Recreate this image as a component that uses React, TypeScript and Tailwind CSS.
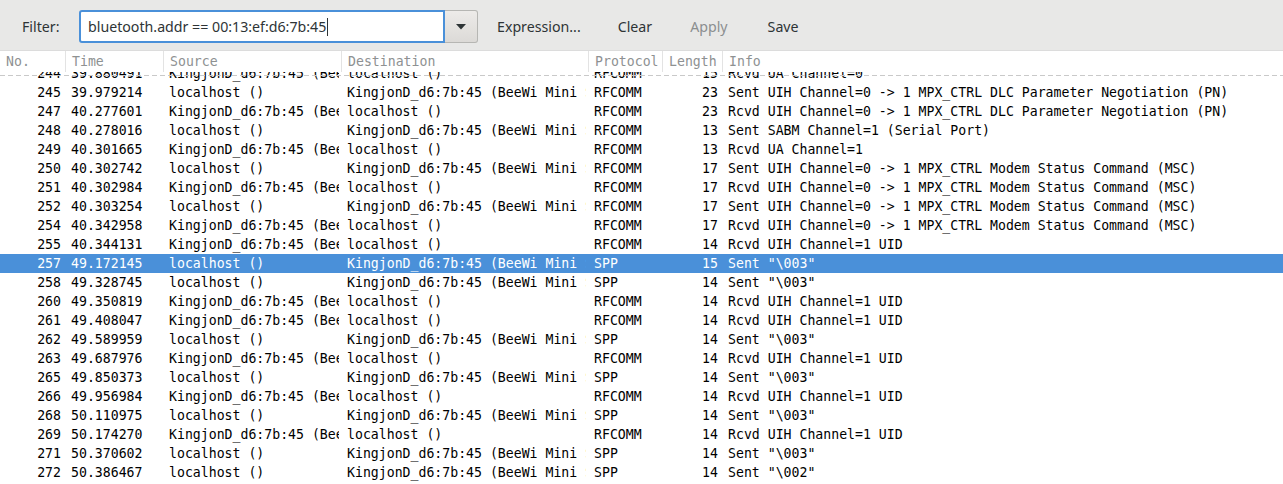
type Pkt = {
  no: number;
  time: string;
  src: string;
  dst: string;
  proto: string;
  len: number;
  info: string;
};

const DEV = "KingjonD_d6:7b:45 (BeeWi Mini Speaker)";
const LH = "localhost ()";
const MSC = "UIH Channel=0 -> 1 MPX_CTRL Modem Status Command (MSC)";
const PN = "UIH Channel=0 -> 1 MPX_CTRL DLC Parameter Negotiation (PN)";
const UID = "Rcvd UIH Channel=1 UID";

const sent = (no: number, time: string, proto: string, len: number, info: string): Pkt => ({
  no, time, src: LH, dst: DEV, proto, len, info,
});
const rcvd = (no: number, time: string, proto: string, len: number, info: string): Pkt => ({
  no, time, src: DEV, dst: LH, proto, len, info,
});

const PACKETS: Pkt[] = [
  rcvd(244, "39.880491", "RFCOMM", 15, "Rcvd UA Channel=0"),
  sent(245, "39.979214", "RFCOMM", 23, "Sent " + PN),
  rcvd(247, "40.277601", "RFCOMM", 23, "Rcvd " + PN),
  sent(248, "40.278016", "RFCOMM", 13, "Sent SABM Channel=1 (Serial Port)"),
  rcvd(249, "40.301665", "RFCOMM", 13, "Rcvd UA Channel=1"),
  sent(250, "40.302742", "RFCOMM", 17, "Sent " + MSC),
  rcvd(251, "40.302984", "RFCOMM", 17, "Rcvd " + MSC),
  sent(252, "40.303254", "RFCOMM", 17, "Sent " + MSC),
  rcvd(254, "40.342958", "RFCOMM", 17, "Rcvd " + MSC),
  rcvd(255, "40.344131", "RFCOMM", 14, UID),
  sent(257, "49.172145", "SPP", 15, 'Sent "\\003"'),
  sent(258, "49.328745", "SPP", 14, 'Sent "\\003"'),
  rcvd(260, "49.350819", "RFCOMM", 14, UID),
  rcvd(261, "49.408047", "RFCOMM", 14, UID),
  sent(262, "49.589959", "SPP", 14, 'Sent "\\003"'),
  rcvd(263, "49.687976", "RFCOMM", 14, UID),
  sent(265, "49.850373", "SPP", 14, 'Sent "\\003"'),
  rcvd(266, "49.956984", "RFCOMM", 14, UID),
  sent(268, "50.110975", "SPP", 14, 'Sent "\\003"'),
  rcvd(269, "50.174270", "RFCOMM", 14, UID),
  sent(271, "50.370602", "SPP", 14, 'Sent "\\003"'),
  sent(272, "50.386467", "SPP", 14, 'Sent "\\002"'),
];

const SELECTED = 257;
const COLS = "grid grid-cols-[65px_98px_178px_247px_74px_60px_1fr]";

function Cell({ children, right }: { children: React.ReactNode; right?: boolean }) {
  return (
    <div className={`overflow-hidden whitespace-pre ${right ? "pr-1 text-right" : "pl-1.5 pr-[2px]"}`}>
      <div className="overflow-hidden">{children}</div>
    </div>
  );
}

export default function App() {
  return (
    <div className="w-[1283px] h-[484px] overflow-hidden bg-white font-['DejaVu_Sans_Mono',monospace]">
      {/* filter toolbar */}
      <div className="h-[50px] pt-[3px] bg-[#e8e8e7] flex items-center text-[14.2px] text-[#2e3436] font-['Noto_Sans',sans-serif]">
        <span className="ml-[22px] w-[57px]">Filter:</span>
        <div className="h-[33px] w-[366px] bg-white border-2 border-[#4a90d9] rounded-l-[3px] flex items-center pl-[7px]">
          <span>bluetooth.addr == 00:13:ef:d6:7b:45</span>
          <span className="w-px h-[18px] bg-[#2e3436] ml-px" />
        </div>
        <button className="h-[33px] w-[33px] border border-[#b6b6b3] border-l-0 rounded-r-[3px] bg-gradient-to-b from-[#edebe9] to-[#dcdad7] flex items-center justify-center">
          <svg width="10" height="6" viewBox="0 0 10 6"><path d="M0 0h10L5 5.5z" fill="#2e3436" /></svg>
        </button>
        <span className="ml-[19px]">Expression...</span>
        <span className="ml-[37px]">Clear</span>
        <span className="ml-[38px] text-[#8b8e8f]">Apply</span>
        <span className="ml-[40px]">Save</span>
      </div>

      {/* column header */}
      <div className={`${COLS} h-[22px] border-t border-[#dcdcdc] text-[13.2px] leading-[22px] text-[#8e9192]`}>
        {["No.", "Time", "Source", "Destination", "Protocol", "Length", "Info"].map((h, i) => (
          <div key={h} className={`pl-1.5 overflow-hidden whitespace-pre ${i > 0 ? "border-l border-[#e3e3e3]" : ""}`}>{h}</div>
        ))}
      </div>

      {/* packet list */}
      <div className="relative h-[412px] overflow-hidden">
        <div className="absolute left-0 right-0 top-[3px] h-px bg-[repeating-linear-gradient(90deg,#c9c9c9_0_5px,transparent_5px_8px)] z-10" />
        <div className="-mt-[8px] text-[13.2px] leading-[19px]">
          {PACKETS.map((p) => (
            <div
              key={p.no}
              className={`${COLS} h-[19px] ${p.no === SELECTED ? "bg-[#4a90d9] text-white" : "text-black"}`}
            >
              <Cell right>{p.no}</Cell>
              <Cell>{p.time}</Cell>
              <Cell>{p.src}</Cell>
              <Cell>{p.dst}</Cell>
              <Cell>{p.proto}</Cell>
              <Cell right>{p.len}</Cell>
              <Cell>{p.info}</Cell>
            </div>
          ))}
        </div>
      </div>
    </div>
  );
}
